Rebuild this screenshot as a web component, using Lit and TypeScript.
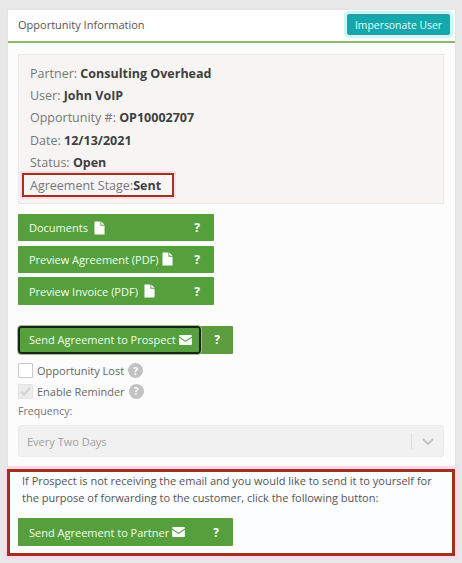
import { LitElement, html, css, svg } from "lit";
import { customElement } from "lit/decorators.js";

const fileIcon = html`<svg class="ico file" viewBox="0 0 12 14" width="11" height="14"><path d="M0.5 0H7V4.5H11.5V14H0.5Z M8 0L11.5 3.5H8Z" fill="#fff"/></svg>`;
const mailIcon = html`<svg class="ico" viewBox="0 0 14 11" width="13" height="10"><path d="M0 1Q0 0 1 0H13Q14 0 14 1V1.6L7 6.2L0 1.6Z M0 3L7 7.6L14 3V10Q14 11 13 11H1Q0 11 0 10Z" fill="#fff"/></svg>`;
const chevron = svg`<path d="M1 1L6 6L11 1" fill="none" stroke="#c4c4c4" stroke-width="2"/>`;

@customElement("app-root")
export class AppRoot extends LitElement {
  static styles = css`
    :host { display: block; height: 563px; box-sizing: border-box; padding: 10px 7px 0 8px; background: #e8e8e8; font-family: "Open Sans", sans-serif; font-size: 11px; color: #555; overflow: hidden; }
    * { box-sizing: border-box; }
    .panel { background: #fcfcfc; height: 546px; display: flex; flex-direction: column; box-shadow: 0 0 2px #ddd; }
    .head { height: 33px; flex: none; background: #fff; border-bottom: 2px solid #8cb870; display: flex; align-items: center; justify-content: space-between; padding: 0 5px 2px 10px; font-size: 11px; color: #555; }
    .imp { background: #14a8ac; color: #e4fffb; border: 1px solid #4a8fa8; border-radius: 2px; height: 21px; width: 103px; display: flex; align-items: center; justify-content: center; font-size: 10.4px; box-shadow: 0 0 0 3px #c8fbf3; }
    .body { padding: 11px 11px 0 10px; flex: 1; display: flex; flex-direction: column; }
    .well { height: 150px; background: #f6f5f4; border: 1px solid #e9e8e6; padding: 7px 11px 0; font-size: 12.5px; color: #777; }
    .row { height: 22.3px; display: flex; align-items: center; white-space: pre; }
    .row b { color: #3f3f3f; font-weight: 700; }
    .stage { width: 152px; height: 23.5px; margin-left: -8px; padding-left: 6px; border: 2px solid #a2301c; box-shadow: 0 0 0 2px #fbdcea; }
    .btns { margin-top: 10px; display: flex; flex-direction: column; gap: 4.4px; }
    .btn { width: 196px; height: 27.3px; background: #55a03c; color: #f2fff0; border-radius: 1px; display: flex; align-items: center; padding-left: 11px; font-size: 11px; white-space: nowrap; }
    .ico { margin-left: 6px; flex: none; }
    .q { margin-left: auto; width: 34px; text-align: center; font-weight: 700; font-size: 12px; color: #fff; }
    .tight .ico { margin-left: 3px; }
    .sendrow { margin-top: 21px; display: flex; width: 215px; height: 28px; background: #5a9c3e; border-radius: 1px; }
    .send { width: 183px; height: 28px; background: #55a03c; color: #f2fff0; border: 2px solid #16261a; border-radius: 3px; outline: 1px solid #a9b98d; display: flex; align-items: center; padding-left: 9px; font-size: 11px; white-space: nowrap; }
    .send .ico { margin-left: 3px; }
    .sendq { flex: 1; display: flex; align-items: center; justify-content: center; font-weight: 700; font-size: 12px; color: #fff; }
    .check { display: flex; align-items: center; gap: 4px; height: 16px; color: #666; font-size: 11px; }
    .box { width: 15px; height: 15px; background: #fff; border: 1px solid #c9c9c9; border-radius: 1px; flex: none; }
    .box.on { background: #ececec; border-color: #e4e4e4; display: flex; align-items: center; justify-content: center; }
    .hint { width: 15px; height: 15px; border-radius: 50%; background: #c2c2c2; color: #fff; font-size: 10px; font-weight: 700; display: flex; align-items: center; justify-content: center; flex: none; }
    .c1 { margin-top: 9px; }
    .c2 { margin-top: 4.5px; }
    .freq { margin-top: 4px; font-size: 10.6px; color: #777; height: 16px; line-height: 16px; }
    .select { margin-top: 6px; height: 32px; background: #f1f1f1; border: 1px solid #ececec; border-radius: 3px; display: flex; align-items: center; padding-left: 8px; color: #a0a0a0; font-size: 11px; }
    .sep { margin-left: auto; width: 1px; height: 16px; background: #dcdcdc; }
    .chev { width: 31px; display: flex; justify-content: center; }
    .callout { flex: none; height: 87px; margin: 12px -11px 0 -11px; border: 3px solid #a2301c; background: #fcfdfe; padding: 0 0 0 12px; box-shadow: 0 0 0 3px #fbd8ea; font-size: 11px; line-height: 17px; color: #555; }
    .callout .t { width: 425px; }
    .wide { width: 215px; height: 28px; margin: 12px 0 0 -4px; }
    .wide .ico { margin-left: 3px; }
  `;

  render() {
    return html`<div class="panel">
      <div class="head"><span>Opportunity Information</span><div class="imp">Impersonate User</div></div>
      <div class="body">
        <div class="well">
          <div class="row">Partner: <b>Consulting Overhead</b></div>
          <div class="row">User: <b>John VoIP</b></div>
          <div class="row">Opportunity #: <b>OP10002707</b></div>
          <div class="row">Date: <b>12/13/2021</b></div>
          <div class="row">Status: <b>Open</b></div>
          <div class="row stage">Agreement Stage:<b>Sent</b></div>
        </div>
        <div class="btns">
          <div class="btn">Documents ${fileIcon}<span class="q">?</span></div>
          <div class="btn tight">Preview Agreement (PDF)${fileIcon}<span class="q">?</span></div>
          <div class="btn">Preview Invoice (PDF)${fileIcon}<span class="q">?</span></div>
        </div>
        <div class="sendrow"><div class="send">Send Agreement to Prospect ${mailIcon}</div><div class="sendq">?</div></div>
        <div class="check c1"><span class="box"></span>Opportunity Lost<span class="hint">?</span></div>
        <div class="check c2"><span class="box on"><svg width="11" height="9" viewBox="0 0 11 9"><path d="M1 4.5L4 7.5L10 1" fill="none" stroke="#d2d2d2" stroke-width="2"/></svg></span>Enable Reminder<span class="hint">?</span></div>
        <div class="freq">Frequency:</div>
        <div class="select">Every Two Days<span class="sep"></span><span class="chev"><svg width="12" height="7" viewBox="0 0 12 7">${chevron}</svg></span></div>
        <div class="callout">
          <div class="t">If Prospect is not receiving the email and you would like to send it to yourself for the purpose of forwarding to the customer, click the following button:</div>
          <div class="btn wide">Send Agreement to Partner ${mailIcon}<span class="q">?</span></div>
        </div>
      </div>
    </div>`;
  }
}
